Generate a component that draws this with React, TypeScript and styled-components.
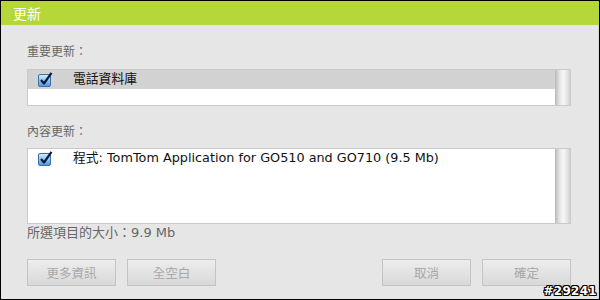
import React from "react";
import styled, { createGlobalStyle } from "styled-components";

const Global = createGlobalStyle`
  html, body { margin: 0; padding: 0; background: #fff; }
  body { font-family: "DejaVu Sans", "Noto Sans CJK TC", sans-serif; }
`;

const Frame = styled.div`
  width: 600px;
  height: 300px;
  box-sizing: border-box;
  border: 1px solid #000;
  background: #e6e6e6;
  display: flex;
  flex-direction: column;
  position: relative;
  overflow: hidden;
`;

const TitleBar = styled.div`
  height: 24px;
  background: #b6d73a;
  color: #fff;
  font-family: "Noto Sans CJK TC", sans-serif;
  font-size: 14px;
  display: flex;
  align-items: center;
  padding-left: 12px;
`;

const Body = styled.div`
  flex: 1;
  display: flex;
  flex-direction: column;
  padding: 0 27px 0 26px;
  border-right: 1px solid #d8d8d8;
`;

const Label = styled.div<{ $top: number }>`
  margin-top: ${(p) => p.$top}px;
  height: 16px;
  font-family: "Noto Sans CJK TC", sans-serif;
  font-size: 12px;
  color: #666;
  display: flex;
  align-items: center;
`;

const List = styled.div<{ $h: number; $top: number }>`
  margin-top: ${(p) => p.$top}px;
  height: ${(p) => p.$h}px;
  box-sizing: border-box;
  border: 1px solid #cacaca;
  background: #fff;
  display: flex;
`;

const Rows = styled.div`
  flex: 1;
  display: flex;
  flex-direction: column;
`;

const Row = styled.div<{ $sel?: boolean }>`
  height: 19px;
  background: ${(p) => (p.$sel ? "#d2d2d2" : "#fff")};
  display: flex;
  align-items: center;
  padding-left: 10px;
  gap: 20px;
  font-family: "DejaVu Sans", "Noto Sans CJK TC", sans-serif;
  font-size: 12.8px;
  color: #111;
`;

const RowText = styled.span`
  line-height: 1;
`;

const Scroll = styled.div`
  width: 15px;
  background: linear-gradient(to right, #b9b9b9 0%, #e4e4e4 30%, #f7f7f7 55%, #e6e6e6 80%, #cfcfcf 100%);
`;

const Summary = styled.div`
  margin-top: 0;
  height: 14px;
  font-family: "DejaVu Sans", "Noto Sans CJK TC", sans-serif;
  font-size: 13px;
  color: #666;
  display: flex;
  align-items: center;
`;

const ButtonBar = styled.div`
  margin-top: 21px;
  display: flex;
  gap: 11px;
`;

const Spacer = styled.div`
  flex: 1;
`;

const Button = styled.div`
  width: 89px;
  height: 27px;
  box-sizing: border-box;
  border: 1px solid #c4c4c4;
  background: linear-gradient(to bottom, #ededed 0%, #e2e2e2 55%, #d8d8d8 100%);
  display: flex;
  align-items: center;
  justify-content: center;
  font-family: "Noto Sans CJK TC", sans-serif;
  font-size: 12.5px;
  color: #a8a8a8;
`;

const Mark = styled.div`
  position: absolute;
  right: 2px;
  bottom: 1px;
  font-family: "DejaVu Sans", sans-serif;
  font-weight: bold;
  font-size: 12px;
  color: #fff;
  letter-spacing: 0.3px;
  text-shadow: 1px 0 0 #000, -1px 0 0 #000, 0 1px 0 #000, 0 -1px 0 #000,
    1px 1px 0 #000, -1px -1px 0 #000, 1px -1px 0 #000, -1px 1px 0 #000;
`;

const Check = () => (
  <svg width="15" height="15" viewBox="0 0 15 15">
    <defs>
      <linearGradient id="cb" x1="0" y1="0" x2="0" y2="1">
        <stop offset="0" stopColor="#d8ecff" />
        <stop offset="0.5" stopColor="#8fc3f2" />
        <stop offset="1" stopColor="#4f95dc" />
      </linearGradient>
    </defs>
    <rect x="0.5" y="2.5" width="12" height="12" rx="1.5" fill="url(#cb)" stroke="#3d6fa8" />
    <path d="M3 8 L6 11.5 L13.5 0.8" fill="none" stroke="#0b1c3c" strokeWidth="2.2" strokeLinejoin="round" />
  </svg>
);

export default function App() {
  return (
    <>
      <Global />
      <Frame>
        <TitleBar>更新</TitleBar>
        <Body>
          <Label $top={17}>重要更新：</Label>
          <List $top={11} $h={37}>
            <Rows>
              <Row $sel>
                <Check />
                <RowText>電話資料庫</RowText>
              </Row>
            </Rows>
            <Scroll />
          </List>
          <Label $top={16}>內容更新：</Label>
          <List $top={10} $h={76}>
            <Rows>
              <Row>
                <Check />
                <RowText>程式: TomTom Application for GO510 and GO710 (9.5 Mb)</RowText>
              </Row>
            </Rows>
            <Scroll />
          </List>
          <Summary>所選項目的大小：9.9 Mb</Summary>
          <ButtonBar>
            <Button>更多資訊</Button>
            <Button>全空白</Button>
            <Spacer />
            <Button>取消</Button>
            <Button>確定</Button>
          </ButtonBar>
        </Body>
        <Mark>#29241</Mark>
      </Frame>
    </>
  );
}
